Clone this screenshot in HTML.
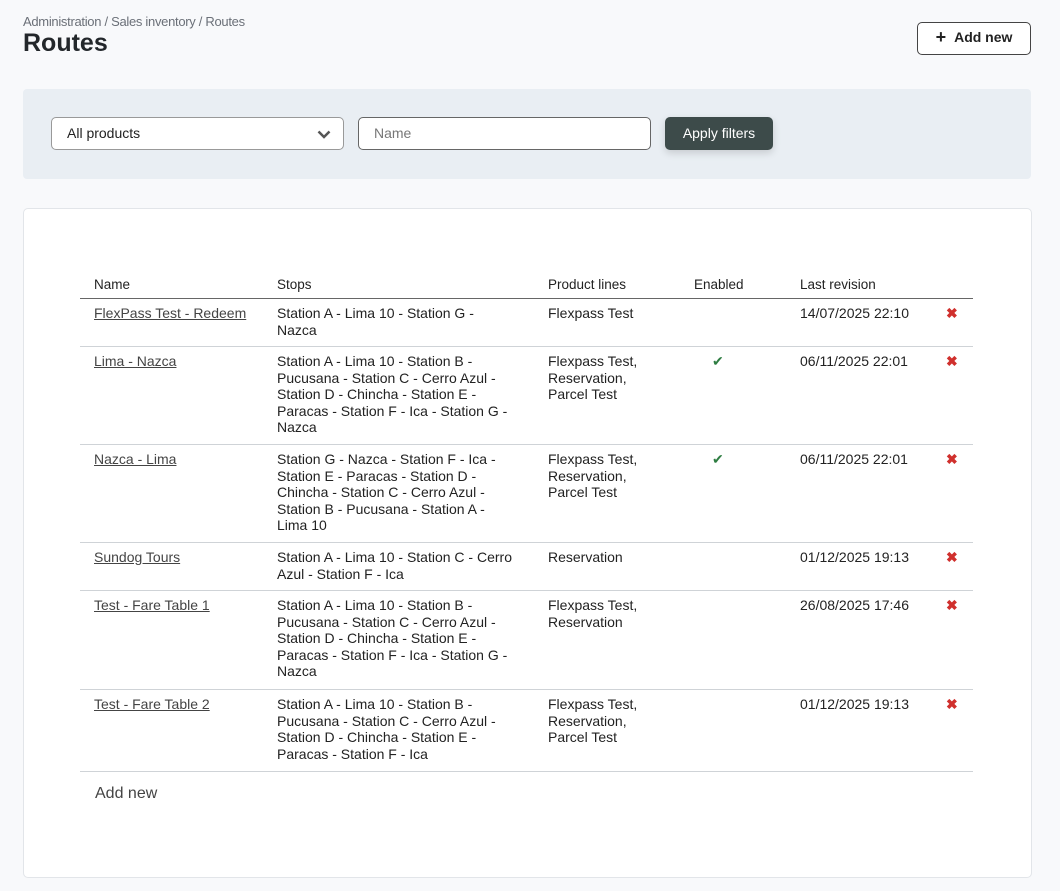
<!DOCTYPE html>
<html><head><meta charset="utf-8"><style>
*{box-sizing:border-box;margin:0;padding:0}
body{width:1060px;height:891px;background:#f8f9fb;font-family:"Liberation Sans",sans-serif;color:#222;position:relative;overflow:hidden}
.bc{position:absolute;left:23px;top:14px;font-size:13px;color:#6b7078;letter-spacing:-0.3px}
h1{position:absolute;left:23px;top:29px;font-size:25px;font-weight:bold;color:#23272b}
.add{position:absolute;left:917px;top:22px;width:114px;height:33px;border:1px solid #444;border-radius:5px;background:#fff;font-size:14px;font-weight:bold;display:flex;align-items:center;justify-content:center;gap:8px;color:#222;padding-bottom:3px}
.filt{position:absolute;left:23px;top:89px;width:1008px;height:90px;background:#e9eef3;border-radius:4px}
.sel{position:absolute;left:51px;top:117px;width:293px;height:33px;border:1px solid #999;border-radius:5px;background:#fff;font-size:14px;padding:7px 15px;color:#222}
.sel svg{position:absolute;right:12px;top:12px}
.inp{position:absolute;left:358px;top:117px;width:293px;height:33px;border:1px solid #666;border-radius:5px;background:#fff;font-size:14px;padding:7px 15px;color:#777}
.btn{position:absolute;left:665px;top:117px;width:108px;height:33px;background:#3d4b4a;border-radius:5px;color:#fff;font-size:14px;display:flex;align-items:center;justify-content:center;box-shadow:0 3px 8px rgba(0,0,0,.15);padding-bottom:2px}
.card{position:absolute;left:23px;top:208px;width:1009px;height:670px;background:#fff;border:1px solid #e2e5e9;border-radius:5px}
.row{position:absolute;left:80px;width:893px;border-bottom:1px solid #cfd3d7;font-size:14px;line-height:16.5px;white-space:nowrap}
.row>div{position:absolute;top:6px}
.hd{top:272px;height:27px;border-bottom:1.5px solid #666;font-size:13.5px}
.hd>div{top:5px}
.a{left:14px}.b{left:197px}.c{left:468px}.d{left:614px}.e{left:720px}.f{left:866px}
.a u{color:#444}
.ok{color:#2e7d42;left:632px!important}
.x{color:#d0302d;font-weight:bold}
.an{position:absolute;left:95px;top:785px;font-size:16px;color:#444}
</style></head><body>
<div class="bc">Administration / Sales inventory / Routes</div>
<h1>Routes</h1>
<div class="add"><span style="font-size:18px;line-height:1">+</span>Add new</div>
<div class="filt"></div>
<div class="sel">All products<svg width="14" height="9" viewBox="0 0 14 9"><path d="M1.5 1.5 7 7l5.5-5.5" fill="none" stroke="#555" stroke-width="2.5"/></svg></div>
<div class="inp">Name</div>
<div class="btn">Apply filters</div>
<div class="card"></div>
<div class="row hd"><div class="a">Name</div><div class="b">Stops</div><div class="c">Product lines</div><div class="d">Enabled</div><div class="e">Last revision</div></div>
<div class="row" style="top:299px;height:48px"><div class="a"><u>FlexPass Test - Redeem</u></div><div class="b">Station A - Lima 10 - Station G -<br>Nazca</div><div class="c">Flexpass Test</div><div class="e">14/07/2025 22:10</div><div class="f x">✖</div></div>
<div class="row" style="top:347px;height:98px"><div class="a"><u>Lima - Nazca</u></div><div class="b">Station A - Lima 10 - Station B -<br>Pucusana - Station C - Cerro Azul -<br>Station D - Chincha - Station E -<br>Paracas - Station F - Ica - Station G -<br>Nazca</div><div class="c">Flexpass Test,<br>Reservation,<br>Parcel Test</div><div class="ok">✔</div><div class="e">06/11/2025 22:01</div><div class="f x">✖</div></div>
<div class="row" style="top:445px;height:98px"><div class="a"><u>Nazca - Lima</u></div><div class="b">Station G - Nazca - Station F - Ica -<br>Station E - Paracas - Station D -<br>Chincha - Station C - Cerro Azul -<br>Station B - Pucusana - Station A -<br>Lima 10</div><div class="c">Flexpass Test,<br>Reservation,<br>Parcel Test</div><div class="ok">✔</div><div class="e">06/11/2025 22:01</div><div class="f x">✖</div></div>
<div class="row" style="top:543px;height:48px"><div class="a"><u>Sundog Tours</u></div><div class="b">Station A - Lima 10 - Station C - Cerro<br>Azul - Station F - Ica</div><div class="c">Reservation</div><div class="e">01/12/2025 19:13</div><div class="f x">✖</div></div>
<div class="row" style="top:591px;height:99px"><div class="a"><u>Test - Fare Table 1</u></div><div class="b">Station A - Lima 10 - Station B -<br>Pucusana - Station C - Cerro Azul -<br>Station D - Chincha - Station E -<br>Paracas - Station F - Ica - Station G -<br>Nazca</div><div class="c">Flexpass Test,<br>Reservation</div><div class="e">26/08/2025 17:46</div><div class="f x">✖</div></div>
<div class="row" style="top:690px;height:82px"><div class="a"><u>Test - Fare Table 2</u></div><div class="b">Station A - Lima 10 - Station B -<br>Pucusana - Station C - Cerro Azul -<br>Station D - Chincha - Station E -<br>Paracas - Station F - Ica</div><div class="c">Flexpass Test,<br>Reservation,<br>Parcel Test</div><div class="e">01/12/2025 19:13</div><div class="f x">✖</div></div>
<div class="an">Add new</div>
</body></html>
